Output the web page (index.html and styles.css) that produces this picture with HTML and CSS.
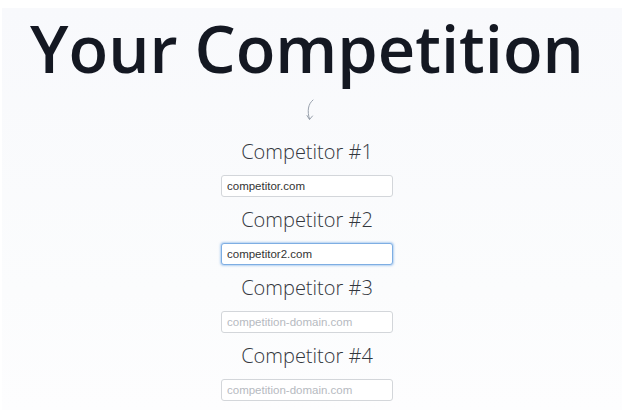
FILE: index.html
```html
<!DOCTYPE html>
<html lang="en">
<head>
    <meta charset="UTF-8">
    <title>Your Competition</title>
    <link rel="stylesheet" href="styles.css">
</head>
<body>

    <div class="panel">
        <h1>Your Competition</h1>

        <div class="arrow">
            <svg width="12" height="22" viewBox="0 0 12 22">
                <path d="M8 1 C3 5, 2 12, 4.5 20" fill="none" stroke="#8d96a3" stroke-width="0.9" stroke-linecap="round"/>
                <path d="M2 16.5 L4.5 20.5 L7.5 17" fill="none" stroke="#8d96a3" stroke-width="0.9" stroke-linecap="round" stroke-linejoin="round"/>
            </svg>
        </div>

        <div class="competitors">
            <div class="field">
                <label for="c1">Competitor #1</label>
                <input type="text" id="c1" value="competitor.com" placeholder="competition-domain.com">
            </div>
            <div class="field">
                <label for="c2">Competitor #2</label>
                <input type="text" id="c2" class="focused" value="competitor2.com" placeholder="competition-domain.com">
            </div>
            <div class="field">
                <label for="c3">Competitor #3</label>
                <input type="text" id="c3" placeholder="competition-domain.com">
            </div>
            <div class="field">
                <label for="c4">Competitor #4</label>
                <input type="text" id="c4" placeholder="competition-domain.com">
            </div>
        </div>
    </div>

</body>
</html>
```

FILE: styles.css
```css
body {
    margin: 0;
    background-color: #fff;
    font-family: "Open Sans", sans-serif;
}
.panel {
    display: flow-root;
    margin: 8px 8px 0 2px;
    padding: 0 10px 0 0;
    height: 402px;
    background: linear-gradient(#f8f9fc, #fbfcfd 70%, #fdfdfe);
    text-align: center;
}
h1 {
    margin: -4px 0;
    font-size: 65px;
    font-weight: 600;
    line-height: 88px;
    color: #141822;
}
.arrow {
    height: 26px;
    padding-top: 11px;
    padding-left: 8px;
}
.arrow svg {
    display: block;
    margin: 0 auto;
}
.competitors {
    display: flex;
    flex-direction: column;
    align-items: center;
    padding-top: 4px;
}
.field {
    display: flex;
    flex-direction: column;
    align-items: center;
}
label {
    display: block;
    font-size: 20px;
    font-weight: 300;
    color: #33373d;
    line-height: 30px;
    margin-top: 8px;
}
input[type="text"] {
    box-sizing: border-box;
    width: 172px;
    height: 22px;
    margin-top: 8px;
    padding: 0 5px;
    border: 1px solid #d3d6da;
    border-radius: 3px;
    background-color: #fff;
    font-family: "Liberation Sans", Arial, sans-serif;
    font-size: 11.5px;
    color: #333;
    outline: none;
}
input[type="text"]::placeholder {
    color: #b6babf;
}
input.focused {
    border-color: #7eaee3;
    box-shadow: 0 0 2px 1px rgba(110, 165, 230, 0.5);
}
```
